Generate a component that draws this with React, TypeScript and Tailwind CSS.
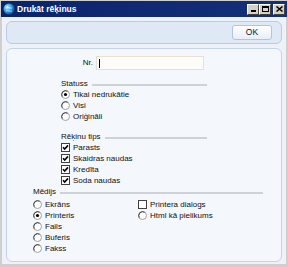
import React from 'react';

const Radio: React.FC<{ on?: boolean }> = ({ on }) => (
  <svg width="9" height="9" viewBox="0 0 9 9" className="shrink-0">
    <circle cx="4.5" cy="4.5" r="4" fill="#ffffff" stroke="#a0a0a0" />
    <path d="M1.2 6.6 A4 4 0 0 1 6.6 1.2" fill="none" stroke="#404040" strokeWidth="1" />
    {on && <circle cx="4.5" cy="4.5" r="1.6" fill="#000000" />}
  </svg>
);

const Check: React.FC<{ on?: boolean }> = ({ on }) => (
  <svg width="9" height="9" viewBox="0 0 9 9" className="shrink-0">
    <rect x="0.5" y="0.5" width="8" height="8" fill="#ffffff" stroke="#404040" />
    {on && <path d="M2 4.2 L3.7 6 L7 2.4" fill="none" stroke="#000000" strokeWidth="1.6" />}
  </svg>
);

const Row: React.FC<{ children: React.ReactNode }> = ({ children }) => (
  <div className="h-[11px] flex items-center gap-[2px]">{children}</div>
);

const Header: React.FC<{ label: string }> = ({ label }) => (
  <div className="h-[11px] flex items-center">
    <span>{label}</span>
    <div className="flex-1 ml-[4px] mt-[3px] h-[2px] bg-[#cdd1d8]" />
  </div>
);

const WinBtn: React.FC<{ children: React.ReactNode }> = ({ children }) => (
  <div className="w-[12px] h-[11px] bg-[#d4d0c8] border border-t-white border-l-white border-r-[#404040] border-b-[#404040] flex items-center justify-center text-black">
    {children}
  </div>
);

export default function App() {
  return (
    <div
      className="w-[288px] h-[267px] bg-[#cfcfcf] p-[1px] flex flex-col text-[8px] text-[#111] overflow-hidden"
      style={{ fontFamily: '"Liberation Sans", Arial, sans-serif' }}
    >
      {/* title bar */}
      <div className="h-[16px] bg-gradient-to-r from-[#0a246a] to-[#14307a] flex items-center pl-[2px] pr-[2px] shrink-0">
        <svg width="12" height="12" viewBox="0 0 12 12" className="shrink-0">
          <defs>
            <radialGradient id="g" cx="0.35" cy="0.35" r="0.7">
              <stop offset="0" stopColor="#c8ecff" />
              <stop offset="0.5" stopColor="#3aa0e0" />
              <stop offset="1" stopColor="#0a4c9a" />
            </radialGradient>
          </defs>
          <circle cx="6" cy="6" r="5.5" fill="url(#g)" />
          <path d="M3 4 C5 3 6 6 9 5 M3 8 C5 7 7 9 9 8" stroke="#ffffff" strokeWidth="0.8" fill="none" opacity="0.7" />
        </svg>
        <span className="ml-[2px] text-white font-bold text-[8.5px]">Drukāt rēķinus</span>
        <div className="ml-auto flex items-center">
          <WinBtn>
            <div className="w-[5px] h-[2px] bg-black mt-[4px]" />
          </WinBtn>
          <WinBtn>
            <div className="w-[7px] h-[6px] border border-black border-t-2" />
          </WinBtn>
          <div className="w-[2px]" />
          <WinBtn>
            <svg width="7" height="6" viewBox="0 0 7 6">
              <path d="M0.5 0.5 L6.5 5.5 M6.5 0.5 L0.5 5.5" stroke="#000" strokeWidth="1.5" />
            </svg>
          </WinBtn>
        </div>
      </div>

      {/* body */}
      <div className="flex-1 bg-[#eef2f8] mx-[1px] mb-[2px] px-[4px] pt-[4px] pb-[2px] flex flex-col gap-[4px]">
        <div className="h-[23px] rounded-[6px] border border-[#b9cbe6] bg-[#dfe8f5] flex items-center justify-end pr-[9px]">
          <div className="w-[40px] h-[15px] rounded-[3px] border border-[#b3c3dc] bg-gradient-to-b from-white to-[#e8eef7] flex items-center justify-center text-[8.5px]">
            OK
          </div>
        </div>

        <div className="flex-1 rounded-[6px] border border-[#c4d3ea] bg-[#f4f7fb] flex flex-col pt-[7px]">
          <div className="flex items-center h-[14px]">
            <span className="w-[86px] text-right">Nr.</span>
            <div className="ml-[3px] w-[108px] h-[14px] bg-[#fdfcf8] border border-[#e6e1d4] flex items-center pl-[2px]">
              <div className="w-[1px] h-[9px] bg-black" />
            </div>
          </div>

          <div className="ml-[54px] w-[146px] mt-[8px] flex flex-col">
            <Header label="Statuss" />
            <Row><Radio on /><span className="ml-[1px]">Tikai nedrukātie</span></Row>
            <Row><Radio /><span className="ml-[1px]">Visi</span></Row>
            <Row><Radio /><span className="ml-[1px]">Oriģināli</span></Row>

            <div className="mt-[9px]">
              <Header label="Rēķinu tips" />
            </div>
            <Row><Check on /><span className="ml-[1px]">Parasts</span></Row>
            <Row><Check on /><span className="ml-[1px]">Skaidras naudas</span></Row>
            <Row><Check on /><span className="ml-[1px]">Kredīta</span></Row>
            <Row><Check on /><span className="ml-[1px]">Soda naudas</span></Row>
          </div>

          <div className="ml-[26px] w-[230px] flex flex-col">
            <Header label="Mēdijs" />
            <div className="mt-[2px] grid grid-cols-[105px_1fr]">
              <div className="flex flex-col">
                <Row><Radio /><span className="ml-[1px]">Ekrāns</span></Row>
                <Row><Radio on /><span className="ml-[1px]">Printeris</span></Row>
                <Row><Radio /><span className="ml-[1px]">Fails</span></Row>
                <Row><Radio /><span className="ml-[1px]">Buferis</span></Row>
                <Row><Radio /><span className="ml-[1px]">Fakss</span></Row>
              </div>
              <div className="flex flex-col">
                <Row><Check /><span className="ml-[1px]">Printera dialogs</span></Row>
                <Row><Radio /><span className="ml-[1px]">Html kā pielikums</span></Row>
              </div>
            </div>
          </div>
        </div>
      </div>
    </div>
  );
}
